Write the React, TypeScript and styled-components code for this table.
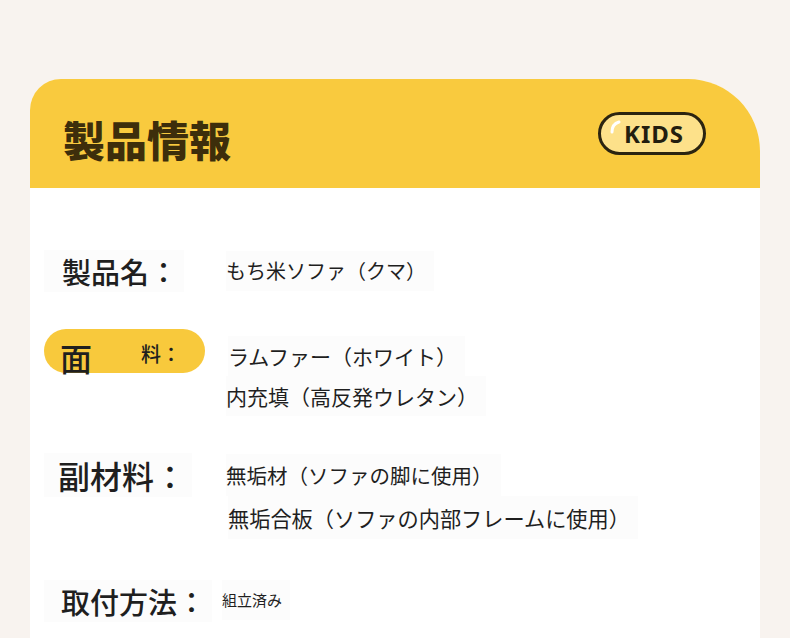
import React from "react";
import styled, { createGlobalStyle } from "styled-components";

const GlobalStyle = createGlobalStyle`
  html, body { margin: 0; padding: 0; }
  body {
    background: #f8f3ef;
    font-family: "Noto Sans CJK JP", "Noto Sans", sans-serif;
    color: #222;
  }
`;

const Page = styled.div`
  width: 790px;
  height: 638px;
  overflow: hidden;
  box-sizing: border-box;
  padding: 79px 30px 0 30px;
  background: #f8f3ef;
`;

const Card = styled.section`
  background: #ffffff;
  border-radius: 31px 72px 0 0;
  overflow: hidden;
  height: 600px;
`;

const Header = styled.header`
  height: 109px;
  background: #f9ca3e;
  display: flex;
  align-items: center;
  justify-content: space-between;
  padding: 0 54px 0 33px;
`;

const Title = styled.h1`
  margin: 10px 0 0 0;
  font-family: "Noto Sans CJK JP", sans-serif;
  font-size: 42px;
  line-height: 1;
  font-weight: 900;
  color: #3d2e0b;
`;

const Badge = styled.div`
  position: relative;
  box-sizing: border-box;
  width: 108px;
  height: 43px;
  border: 3px solid #2b2410;
  border-radius: 22px;
  background: #fde18a;
  display: flex;
  align-items: center;
  justify-content: center;
  padding-left: 4px;
  font-family: "Noto Sans", "Open Sans", sans-serif;
  font-weight: 700;
  font-size: 24px;
  letter-spacing: 1px;
  color: #231e0f;
`;

const Shine = styled.svg`
  position: absolute;
  left: 8px;
  top: 5px;
`;

const Body = styled.div`
  padding: 62px 0 0 14px;
  display: flex;
  flex-direction: column;
`;

const Row = styled.div<{ $gap: number }>`
  display: grid;
  grid-template-columns: 182px 1fr;
  align-items: start;
  margin-top: ${(p) => p.$gap}px;
`;

const Label = styled.div<{ $size: number; $h: number; $pad: number }>`
  justify-self: start;
  height: ${(p) => p.$h}px;
  line-height: ${(p) => p.$h}px;
  font-size: ${(p) => p.$size}px;
  font-weight: 500;
  color: #1f1f1f;
  padding: 0 6px 0 ${(p) => p.$pad}px;
  background: #fcfcfc;
  white-space: nowrap;
`;

const Pill = styled.div`
  width: 161px;
  height: 44px;
  border-radius: 22px;
  background: #f8c93c;
  display: flex;
  align-items: flex-start;
  padding-left: 16px;
  box-sizing: border-box;
`;

const PillBig = styled.span`
  font-size: 32px;
  line-height: 32px;
  margin-top: 12px;
  font-weight: 500;
  color: #1f1f1f;
`;

const PillSmall = styled.span`
  font-size: 20px;
  line-height: 20px;
  margin-top: 15px;
  margin-left: 49px;
  font-weight: 500;
  color: #1f1f1f;
`;

const Values = styled.div<{ $top: number }>`
  display: flex;
  flex-direction: column;
  align-items: flex-start;
  margin-top: ${(p) => p.$top}px;
`;

const Value = styled.div<{ $size: number; $lh: number; $shift?: number }>`
  font-size: ${(p) => p.$size}px;
  line-height: ${(p) => p.$lh}px;
  margin-left: ${(p) => p.$shift ?? 0}px;
  padding-right: 8px;
  color: #1f1f1f;
  background: #fcfcfc;
  white-space: nowrap;
`;

export default function App() {
  return (
    <>
      <GlobalStyle />
      <Page>
        <Card>
          <Header>
            <Title>製品情報</Title>
            <Badge>
              <Shine width="12" height="14" viewBox="0 0 12 14">
                <path d="M3 12 Q3 4 10 2" stroke="#ffffff" strokeWidth="3" fill="none" strokeLinecap="round" />
              </Shine>
              KIDS
            </Badge>
          </Header>
          <Body>
            <Row $gap={0}>
              <Label $size={29} $h={42} $pad={18}>製品名：</Label>
              <Values $top={1}>
                <Value $size={20} $lh={40}>もち米ソファ（クマ）</Value>
              </Values>
            </Row>
            <Row $gap={37}>
              <Pill>
                <PillBig>面</PillBig>
                <PillSmall>料：</PillSmall>
              </Pill>
              <Values $top={7}>
                <Value $size={21} $lh={40} $shift={2}>ラムファー（ホワイト）</Value>
                <Value $size={21} $lh={40}>内充填（高反発ウレタン）</Value>
              </Values>
            </Row>
            <Row $gap={37}>
              <Label $size={32} $h={44} $pad={14}>副材料：</Label>
              <Values $top={1}>
                <Value $size={20.5} $lh={42}>無垢材（ソファの脚に使用）</Value>
                <Value $size={21.2} $lh={43} $shift={2}>無垢合板（ソファの内部フレームに使用）</Value>
              </Values>
            </Row>
            <Row $gap={41}>
              <Label $size={29} $h={42} $pad={17}>取付方法：</Label>
              <Values $top={0}>
                <Value $size={15} $lh={40} $shift={-4}>組立済み</Value>
              </Values>
            </Row>
          </Body>
        </Card>
      </Page>
    </>
  );
}
